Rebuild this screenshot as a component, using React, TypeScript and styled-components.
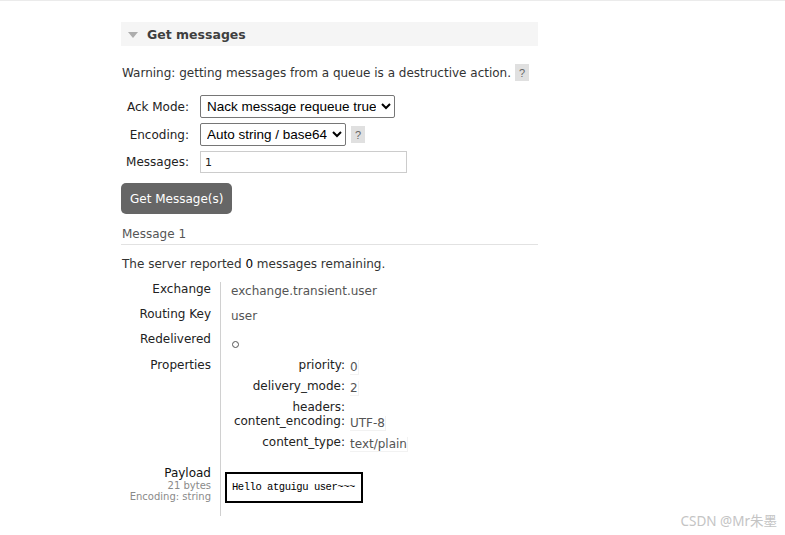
import React from "react";
import styled, { createGlobalStyle } from "styled-components";

const Global = createGlobalStyle`
  html, body { margin: 0; padding: 0; background: #fff; }
  body {
    font-family: "DejaVu Sans", Verdana, sans-serif;
    font-size: 12px;
    color: #484848;
  }
`;

const Page = styled.div`
  width: 785px;
  height: 535px;
  box-sizing: border-box;
  border-top: 1px solid #ebebeb;
  position: relative;
  overflow: hidden;
`;

const Section = styled.div`
  margin: 21px 0 0 121px;
  width: 417px;
`;

const SectionHeader = styled.div`
  height: 24px;
  background: #f5f5f5;
  display: flex;
  align-items: center;
  padding-left: 7px;
  gap: 9px;
  font-weight: bold;
  font-size: 12.5px;
  color: #3f3f3f;
`;

const Triangle = styled.span`
  width: 0;
  height: 0;
  border-left: 5px solid transparent;
  border-right: 5px solid transparent;
  border-top: 6px solid #adadad;
  margin-top: 1px;
`;

const Warning = styled.p`
  margin: 18px 0 0 1px;
  display: flex;
  align-items: center;
  gap: 4px;
  color: #333;
  white-space: nowrap;
`;

const Help = styled.span`
  display: inline-flex;
  align-items: center;
  justify-content: center;
  width: 14px;
  height: 17px;
  background: #e0e0e0;
  color: #666;
  font-size: 11px;
  font-family: "Liberation Sans", Arial, sans-serif;
`;

const Form = styled.div`
  display: grid;
  grid-template-columns: 68px auto;
  column-gap: 11px;
  row-gap: 5px;
  margin-top: 14px;
  align-items: center;
`;

const FormLabel = styled.label`
  text-align: right;
  color: #222;
`;

const FieldRow = styled.div`
  display: flex;
  align-items: center;
  gap: 5px;
`;

const Select = styled.select<{ $w: number }>`
  width: ${(p) => p.$w}px;
  height: 23px;
  font-family: "Liberation Sans", Arial, sans-serif;
  font-size: 13.5px;
  color: #000;
  border: 1px solid #767676;
  border-radius: 2px;
  background: #fff;
  padding: 0 2px;
`;

const Input = styled.input`
  width: 207px;
  height: 22px;
  box-sizing: border-box;
  border: 1px solid #ccc;
  font-family: "DejaVu Sans", Verdana, sans-serif;
  font-size: 11px;
  padding: 0 4px;
  color: #222;
`;

const Button = styled.button`
  margin-top: 10px;
  height: 31px;
  padding: 0 9px;
  background: #666;
  color: #fff;
  border: none;
  border-radius: 5px;
  font-family: "DejaVu Sans", Verdana, sans-serif;
  font-size: 12px;
`;

const SubHeading = styled.div`
  margin-top: 13px;
  padding: 0 0 3px 1px;
  border-bottom: 1px solid #e2e2e2;
  color: #555;
`;

const Remaining = styled.p`
  margin: 12px 0 0 1px;
  color: #333;
`;

const Count = styled.span`
  color: #000;
`;

const Details = styled.div`
  display: grid;
  grid-template-columns: 99px auto;
  margin-top: 11px;
`;

const Key = styled.div<{ $h: number }>`
  height: ${(p) => p.$h}px;
  padding-right: 9px;
  text-align: right;
  color: #222;
  box-sizing: border-box;
`;

const Value = styled.div<{ $h: number; $pad?: number }>`
  height: ${(p) => p.$h}px;
  box-sizing: border-box;
  border-left: 1px solid #d0d0d0;
  padding-left: ${(p) => p.$pad ?? 10}px;
  color: #555;
  padding-top: ${(p) => (p.$pad ? 0 : 2)}px;
`;

const Circle = styled.span`
  display: inline-block;
  width: 5px;
  height: 5px;
  border: 1px solid #555;
  border-radius: 50%;
  margin: 7px 0 0 1px;
`;

const Props = styled.div`
  display: grid;
  grid-template-columns: 114px auto;
  column-gap: 5px;
  margin-top: -2px;
`;

const PropKey = styled.div<{ $h: number }>`
  height: ${(p) => p.$h}px;
  text-align: right;
  color: #222;
  line-height: 14px;
`;

const PropVal = styled.div<{ $h: number }>`
  height: ${(p) => p.$h}px;
  line-height: 14px;
  padding-top: 2px;
  box-sizing: border-box;
  color: #555;
  span {
    border-bottom: 1px solid #f2f2f2;
    border-right: 1px solid #f2f2f2;
  }
`;

const Small = styled.div`
  font-size: 10px;
  color: #8a8a8a;
  line-height: 11px;
`;

const Pre = styled.pre`
  margin: 6px 0 0 0;
  display: inline-block;
  border: 2px solid #000;
  padding: 7px 6px 7px 5px;
  line-height: 13px;
  font-family: "Liberation Mono", "Courier New", monospace;
  font-size: 10.5px;
  color: #000;
  letter-spacing: -0.45px;
`;

const Watermark = styled.div`
  position: absolute;
  right: 8px;
  bottom: 5px;
  color: #c4c4c4;
  font-family: "Noto Sans", "Noto Sans CJK SC", sans-serif;
  font-size: 13.5px;
`;

export default function App() {
  return (
    <Page>
      <Global />
      <Section>
        <SectionHeader>
          <Triangle />
          Get messages
        </SectionHeader>
        <Warning>
          Warning: getting messages from a queue is a destructive action.
          <Help>?</Help>
        </Warning>
        <Form>
          <FormLabel>Ack Mode:</FormLabel>
          <FieldRow>
            <Select $w={195} defaultValue="nack">
              <option value="nack">Nack message requeue true</option>
            </Select>
          </FieldRow>
          <FormLabel>Encoding:</FormLabel>
          <FieldRow>
            <Select $w={146} defaultValue="auto">
              <option value="auto">Auto string / base64</option>
            </Select>
            <Help>?</Help>
          </FieldRow>
          <FormLabel>Messages:</FormLabel>
          <FieldRow>
            <Input defaultValue="1" />
          </FieldRow>
        </Form>
        <Button>Get Message(s)</Button>
        <SubHeading>Message 1</SubHeading>
        <Remaining>
          The server reported <Count>0</Count> messages remaining.
        </Remaining>
        <Details>
          <Key $h={25}>Exchange</Key>
          <Value $h={25}>exchange.transient.user</Value>
          <Key $h={25}>Routing Key</Key>
          <Value $h={25}>user</Value>
          <Key $h={26}>Redelivered</Key>
          <Value $h={26}><Circle /></Value>
          <Key $h={108}>Properties</Key>
          <Value $h={108}>
            <Props>
              <PropKey $h={21}>priority:</PropKey>
              <PropVal $h={21}><span>0</span></PropVal>
              <PropKey $h={21}>delivery_mode:</PropKey>
              <PropVal $h={21}><span>2</span></PropVal>
              <PropKey $h={14}>headers:</PropKey>
              <PropVal $h={14}></PropVal>
              <PropKey $h={21}>content_encoding:</PropKey>
              <PropVal $h={21}><span>UTF-8</span></PropVal>
              <PropKey $h={21}>content_type:</PropKey>
              <PropVal $h={21}><span>text/plain</span></PropVal>
            </Props>
          </Value>
          <Key $h={50}>
            <div style={{ color: "#111" }}>Payload</div>
            <Small>21 bytes</Small>
            <Small>Encoding: string</Small>
          </Key>
          <Value $h={50} $pad={4}>
            <Pre>Hello atguigu user~~~</Pre>
          </Value>
        </Details>
      </Section>
      <Watermark>CSDN @Mr朱墨</Watermark>
    </Page>
  );
}
